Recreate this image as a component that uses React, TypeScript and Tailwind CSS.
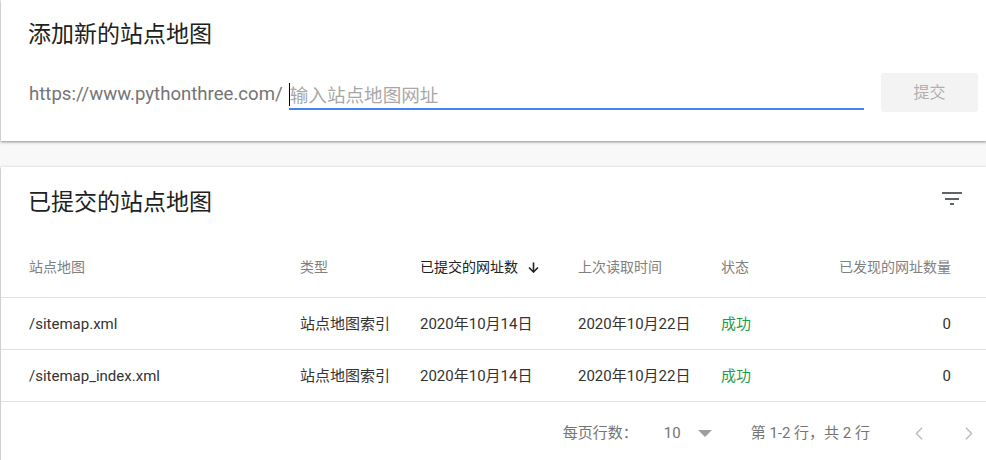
import React from "react";

const font = { fontFamily: 'Roboto, "Noto Sans CJK SC", sans-serif' };

function FilterIcon() {
  return (
    <svg width="20" height="13" viewBox="0 0 20 13" className="text-[#5f6368]">
      <rect x="0" y="0" width="20" height="2" fill="currentColor" />
      <rect x="3" y="6" width="14" height="2" fill="currentColor" />
      <rect x="8" y="11" width="4" height="2" fill="currentColor" />
    </svg>
  );
}

function ArrowDown() {
  return (
    <svg width="11" height="11" viewBox="0 0 11 11" className="text-[#212121]">
      <path d="M5.5 0.5V10" stroke="currentColor" strokeWidth="1.6" fill="none" />
      <path d="M1 5.5l4.5 4.5 4.5-4.5" stroke="currentColor" strokeWidth="1.6" fill="none" />
    </svg>
  );
}

function Chevron({ dir }: { dir: "left" | "right" }) {
  return (
    <svg width="8" height="13" viewBox="0 0 8 13" className="text-[#bdbdbd]">
      <path
        d={dir === "left" ? "M7 0.8L1.5 6.5 7 12.2" : "M1 0.8L6.5 6.5 1 12.2"}
        stroke="currentColor"
        strokeWidth="1.5"
        fill="none"
      />
    </svg>
  );
}

const rows = [{ name: "/sitemap.xml" }, { name: "/sitemap_index.xml" }];

const grid = "grid grid-cols-[271px_120px_158px_143px_100px_1fr] pl-[28px] pr-[35px]";

export default function App() {
  return (
    <div style={font} className="min-h-screen bg-[#f8f8f8] pl-px">
      {/* Card 1 */}
      <div className="bg-white shadow-[0_1px_2px_rgba(0,0,0,0.3),0_1px_3px_1px_rgba(0,0,0,0.12)] pt-[21px] pb-[29px] pl-[28px] pr-[8px]">
        <div className="-ml-[1px] text-[23px] leading-[28px] text-[#212121]">添加新的站点地图</div>
        <div className="mt-[24px] flex items-start">
          <span className="mt-[9px] text-[18.6px] leading-[24px] text-[#757575] whitespace-nowrap">
            https://www.pythonthree.com/
          </span>
          <div className="ml-[6px] flex-1 h-[37px] flex items-end border-b-2 border-[#4285f4]">
            <div className="flex items-end h-[24px] relative">
              <span className="absolute left-0 -top-[1px] w-px h-[23px] bg-black" />
              <span className="pl-[1px] text-[18.6px] leading-[24px] text-[#a8a8a8]">输入站点地图网址</span>
            </div>
          </div>
          <button className="ml-[17px] w-[97px] h-[39px] rounded-[3px] bg-[#f3f3f3] text-[16px] text-[#b0b0b0] flex items-center justify-center">
            提交
          </button>
        </div>
      </div>

      {/* Card 2 */}
      <div className="mt-[26px] bg-white shadow-[0_1px_2px_rgba(0,0,0,0.3),0_1px_3px_1px_rgba(0,0,0,0.12)] pt-[22px]">
        <div className="flex items-start justify-between pl-[28px] pr-[24px]">
          <div className="-ml-[1px] text-[23px] leading-[28px] text-[#212121]">已提交的站点地图</div>
          <div className="mt-[3px]">
            <FilterIcon />
          </div>
        </div>

        <div className={`${grid} pt-[40px] pb-[20px] border-b border-[#e0e0e0] text-[14px] leading-[20px] text-[#808080]`}>
          <div>站点地图</div>
          <div>类型</div>
          <div className="flex items-center text-[#212121]">
            已提交的网址数
            <span className="ml-[10px] flex items-center">
              <ArrowDown />
            </span>
          </div>
          <div>上次读取时间</div>
          <div>状态</div>
          <div className="text-right">已发现的网址数量</div>
        </div>

        {rows.map((r) => (
          <div
            key={r.name}
            className={`${grid} h-[52px] items-center border-b border-[#e0e0e0] text-[15px] leading-[20px] text-[#333333]`}
          >
            <div>{r.name}</div>
            <div>站点地图索引</div>
            <div>2020年10月14日</div>
            <div>2020年10月22日</div>
            <div className="text-[#1e9e4a]">成功</div>
            <div className="text-right">0</div>
          </div>
        ))}

        <div className="h-[62px] flex items-center justify-end pr-[13px] text-[15px] text-[#757575]">
          <span>每页行数：</span>
          <span className="ml-[26px]">10</span>
          <svg width="14" height="7" viewBox="0 0 14 7" className="ml-[17px] text-[#9e9e9e]">
            <path d="M0 0h14L7 7z" fill="currentColor" />
          </svg>
          <span className="ml-[39px] whitespace-pre">第 1-2 行，共 2 行</span>
          <span className="ml-[45px] flex items-center">
            <Chevron dir="left" />
          </span>
          <span className="ml-[42px] flex items-center">
            <Chevron dir="right" />
          </span>
        </div>
      </div>
    </div>
  );
}
